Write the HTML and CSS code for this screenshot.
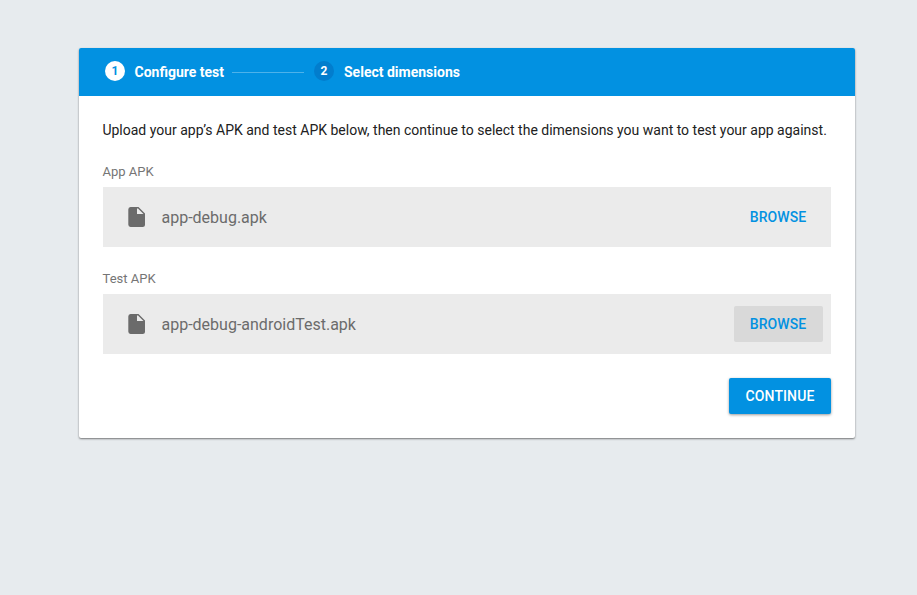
FILE: index.html
```html
<!DOCTYPE html>
<html lang="en">
<head>
<meta charset="utf-8">
<title>Configure test</title>
<link rel="stylesheet" href="styles.css">
</head>
<body>
<main class="card">
  <header class="steps">
    <span class="num active">1</span><span class="step first">Configure test</span>
    <span class="line"></span>
    <span class="num">2</span><span class="step second">Select dimensions</span>
  </header>
  <section class="content">
    <p class="intro">Upload your app’s APK and test APK below, then continue to select the dimensions you want to test your app against.</p>
    <div class="label">App APK</div>
    <div class="file">
      <svg class="icon" viewBox="0 0 17 20"><path d="M2.500 0h8L17 6.500v11a2.500 2.500 0 0 1-2.500 2.500h-12A2.500 2.500 0 0 1 .3 17.500v-15A2.500 2.500 0 0 1 2.500 0zM9 1.500V7h6.500L10 1.500z"/></svg>
      <span class="name">app-debug.apk</span>
      <button class="browse">BROWSE</button>
    </div>
    <div class="label">Test APK</div>
    <div class="file">
      <svg class="icon" viewBox="0 0 17 20"><path d="M2.500 0h8L17 6.500v11a2.500 2.500 0 0 1-2.500 2.500h-12A2.500 2.500 0 0 1 .3 17.500v-15A2.500 2.500 0 0 1 2.500 0zM9 1.500V7h6.500L10 1.500z"/></svg>
      <span class="name">app-debug-androidTest.apk</span>
      <button class="browse hover">BROWSE</button>
    </div>
    <div class="actions"><button class="continue">CONTINUE</button></div>
  </section>
</main>
</body>
</html>
```
FILE: styles.css
```css
* { box-sizing: border-box; }
body {
  min-height: 100vh;
  margin: 0;
  padding: 48px 62px 0 79px;
  background: #e7ebee;
  font-family: Roboto, sans-serif;
  color: #212121;
}
.card {
  height: 390px;
  background: #fff;
  border-radius: 2px;
  box-shadow: 0 1px 2px rgba(0, 0, 0, .5);
  overflow: hidden;
}
.steps {
  display: flex;
  align-items: center;
  height: 48px;
  padding-left: 26px;
  background: #0291e1;
  color: #fff;
  font-size: 14px;
  font-weight: 700;
}
.num {
  width: 20px;
  height: 20px;
  margin-top: -2px;
  border-radius: 50%;
  background: #027dcd;
  font-size: 12px;
  line-height: 20px;
  text-align: center;
}
.num.active { background: #fff; color: #0291e1; }
.step { margin-left: 10px; white-space: nowrap; }
.first { width: 89.500px; margin-left: 9.500px; }
.line { width: 72px; height: 1px; margin: 0 10px 0 8px; background: #4db2ea; }
.content { padding: 24px; }
.intro { margin: 0 0 0 -.6px; font-size: 14px; line-height: 20px; white-space: nowrap; }
.label { margin: 24px 0 0 -.5px; height: 23px; font-size: 13px; line-height: 16px; color: #757575; }
.file {
  display: flex;
  align-items: center;
  height: 60px;
  padding: 0 8px 0 25px;
  background: #ebebeb;
}
.icon { width: 17px; height: 20px; fill: #6b6b6b; }
.name { flex: 1; margin-left: 16.500px; font-size: 16px; color: #6b6b6b; }
button {
  height: 36px;
  padding: 0 1px 0 0;
  border: 0;
  border-radius: 2px;
  font: 500 14px Roboto, sans-serif;
  letter-spacing: .1px;
}
.browse { width: 89px; background: transparent; color: #0291e1; }
.browse.hover { background: #d9d9d9; }
.actions { display: flex; justify-content: flex-end; margin-top: 24px; }
.continue {
  width: 102px;
  padding: 0;
  background: #0291e1;
  color: #fff;
  box-shadow: 0 1px 3px rgba(0, 0, 0, .4);
}
```
